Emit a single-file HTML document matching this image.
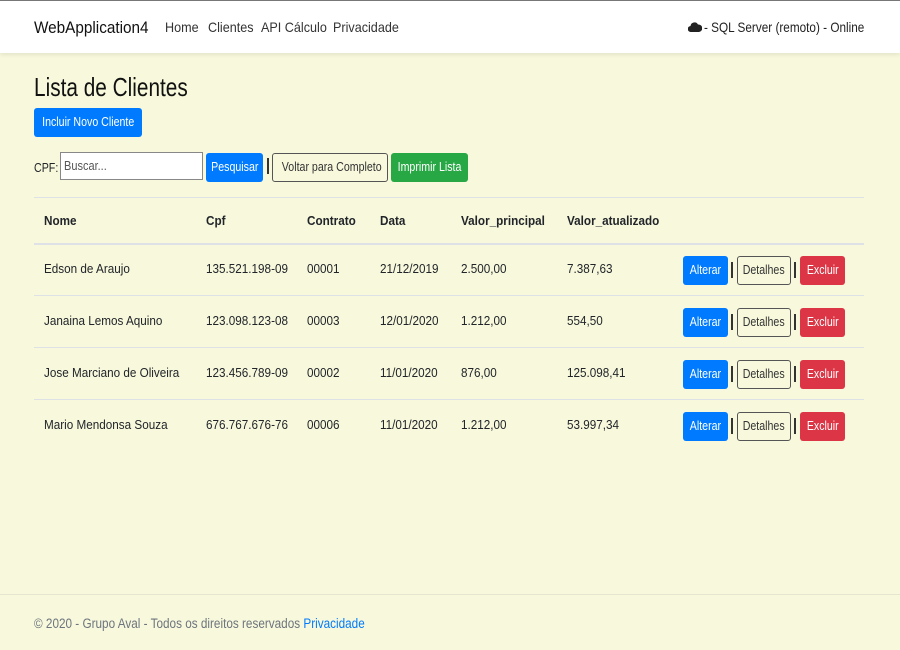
<!DOCTYPE html>
<html><head><style>
*{margin:0;padding:0;box-sizing:border-box}
body{width:900px;height:650px;background:#f8f8dc;font-family:"Liberation Sans",sans-serif;color:#212529;position:relative;overflow:hidden;font-size:13px}
.a{position:absolute;white-space:nowrap;transform:scaleX(.9);transform-origin:0 0}
.b{position:absolute}
.nav{position:absolute;left:0;top:0;width:900px;height:53px;background:#fff;border-top:1px solid #777;box-shadow:0 2px 4px rgba(0,0,0,.08)}
.btn{position:absolute;border-radius:3px;font-size:12.5px;text-align:center;line-height:28px;height:29px;white-space:nowrap;overflow:hidden}
.btn span{display:inline-block;transform:scaleX(.85)}
.p{background:#007bff;color:#fff}.s{background:#28a745;color:#fff}.d{background:#dc3545;color:#fff}.o{border:1px solid #555;color:#333;background:#f8f8dc;line-height:27px}
.hr{position:absolute;left:34px;width:830px;height:1px;background:#dee2e6}
.th{font-weight:bold;font-size:13px}
.bar{position:absolute;width:2px;height:16px;background:#333}
</style></head><body>
<div class="nav">
<div class="a" style="left:34px;top:17px;font-size:17px;color:#111;transform:scaleX(.9)">WebApplication4</div>
<div class="a" style="left:165px;top:18px;font-size:14px;color:#333">Home</div>
<div class="a" style="left:208px;top:18px;font-size:14px;color:#333">Clientes</div>
<div class="a" style="left:261px;top:18px;font-size:14px;color:#333">API Cálculo</div>
<div class="a" style="left:333px;top:18px;font-size:14px;color:#333">Privacidade</div>
<svg class="b" style="left:688px;top:20px" width="14" height="11" viewBox="0 0 14 11"><path d="M3 11a3 3 0 0 1-.5-6A4 4 0 0 1 10 3.5 3.5 3.5 0 0 1 11 11z" fill="#222"/></svg>
<div class="a" style="left:704px;top:18px;font-size:14px;color:#222;transform:scaleX(.84)">- SQL Server (remoto) - Online</div>
</div>
<div class="a" style="left:34px;top:72px;font-size:26px;color:#111;transform:scaleX(.8)">Lista de Clientes</div>
<div class="btn p" style="left:34px;top:108px;width:108px"><span>Incluir Novo Cliente</span></div>
<div class="a" style="left:34px;top:160px;font-size:13px;transform:scaleX(.82)">CPF:</div>
<div class="b" style="left:60px;top:152px;width:143px;height:28px;background:#fff;border:1px solid #888;font-size:12.5px;color:#555;padding:6px 3px"><span style="display:inline-block;transform:scaleX(.88);transform-origin:0 0">Buscar...</span></div>
<div class="btn p" style="left:206px;top:153px;width:57px"><span>Pesquisar</span></div>
<div class="bar" style="left:267px;top:158px"></div>
<div class="btn o" style="left:272px;top:153px;width:116px"><span>Voltar para Completo</span></div>
<div class="btn s" style="left:391px;top:153px;width:77px"><span>Imprimir Lista</span></div>
<div class="hr" style="top:197px"></div>
<div class="a th" style="left:44px;top:213px">Nome</div>
<div class="a th" style="left:206px;top:213px">Cpf</div>
<div class="a th" style="left:307px;top:213px">Contrato</div>
<div class="a th" style="left:380px;top:213px">Data</div>
<div class="a th" style="left:461px;top:213px">Valor_principal</div>
<div class="a th" style="left:567px;top:213px">Valor_atualizado</div>
<div class="hr" style="top:243px;height:2px"></div>

<div class="a" style="left:44px;top:261px">Edson de Araujo</div><div class="a" style="left:206px;top:261px">135.521.198-09</div><div class="a" style="left:307px;top:261px">00001</div><div class="a" style="left:380px;top:261px">21/12/2019</div><div class="a" style="left:461px;top:261px">2.500,00</div><div class="a" style="left:567px;top:261px">7.387,63</div>
<div class="btn p" style="left:683px;top:256px;width:45px"><span>Alterar</span></div><div class="bar" style="left:731px;top:262px"></div><div class="btn o" style="left:737px;top:256px;width:54px"><span>Detalhes</span></div><div class="bar" style="left:794px;top:262px"></div><div class="btn d" style="left:800px;top:256px;width:45px"><span>Excluir</span></div>
<div class="hr" style="top:295px"></div>

<div class="a" style="left:44px;top:313px">Janaina Lemos Aquino</div><div class="a" style="left:206px;top:313px">123.098.123-08</div><div class="a" style="left:307px;top:313px">00003</div><div class="a" style="left:380px;top:313px">12/01/2020</div><div class="a" style="left:461px;top:313px">1.212,00</div><div class="a" style="left:567px;top:313px">554,50</div>
<div class="btn p" style="left:683px;top:308px;width:45px"><span>Alterar</span></div><div class="bar" style="left:731px;top:314px"></div><div class="btn o" style="left:737px;top:308px;width:54px"><span>Detalhes</span></div><div class="bar" style="left:794px;top:314px"></div><div class="btn d" style="left:800px;top:308px;width:45px"><span>Excluir</span></div>
<div class="hr" style="top:347px"></div>

<div class="a" style="left:44px;top:365px">Jose Marciano de Oliveira</div><div class="a" style="left:206px;top:365px">123.456.789-09</div><div class="a" style="left:307px;top:365px">00002</div><div class="a" style="left:380px;top:365px">11/01/2020</div><div class="a" style="left:461px;top:365px">876,00</div><div class="a" style="left:567px;top:365px">125.098,41</div>
<div class="btn p" style="left:683px;top:360px;width:45px"><span>Alterar</span></div><div class="bar" style="left:731px;top:366px"></div><div class="btn o" style="left:737px;top:360px;width:54px"><span>Detalhes</span></div><div class="bar" style="left:794px;top:366px"></div><div class="btn d" style="left:800px;top:360px;width:45px"><span>Excluir</span></div>
<div class="hr" style="top:399px"></div>

<div class="a" style="left:44px;top:417px">Mario Mendonsa Souza</div><div class="a" style="left:206px;top:417px">676.767.676-76</div><div class="a" style="left:307px;top:417px">00006</div><div class="a" style="left:380px;top:417px">11/01/2020</div><div class="a" style="left:461px;top:417px">1.212,00</div><div class="a" style="left:567px;top:417px">53.997,34</div>
<div class="btn p" style="left:683px;top:412px;width:45px"><span>Alterar</span></div><div class="bar" style="left:731px;top:418px"></div><div class="btn o" style="left:737px;top:412px;width:54px"><span>Detalhes</span></div><div class="bar" style="left:794px;top:418px"></div><div class="btn d" style="left:800px;top:412px;width:45px"><span>Excluir</span></div>

<div class="b" style="left:0;top:594px;width:900px;height:1px;background:#e6e6d0"></div>
<div class="a" style="left:34px;top:616px;font-size:13.5px;color:#6c757d;transform:scaleX(.87)">© 2020 - Grupo Aval - Todos os direitos reservados <span style="color:#007bff">Privacidade</span></div>
</body></html>
